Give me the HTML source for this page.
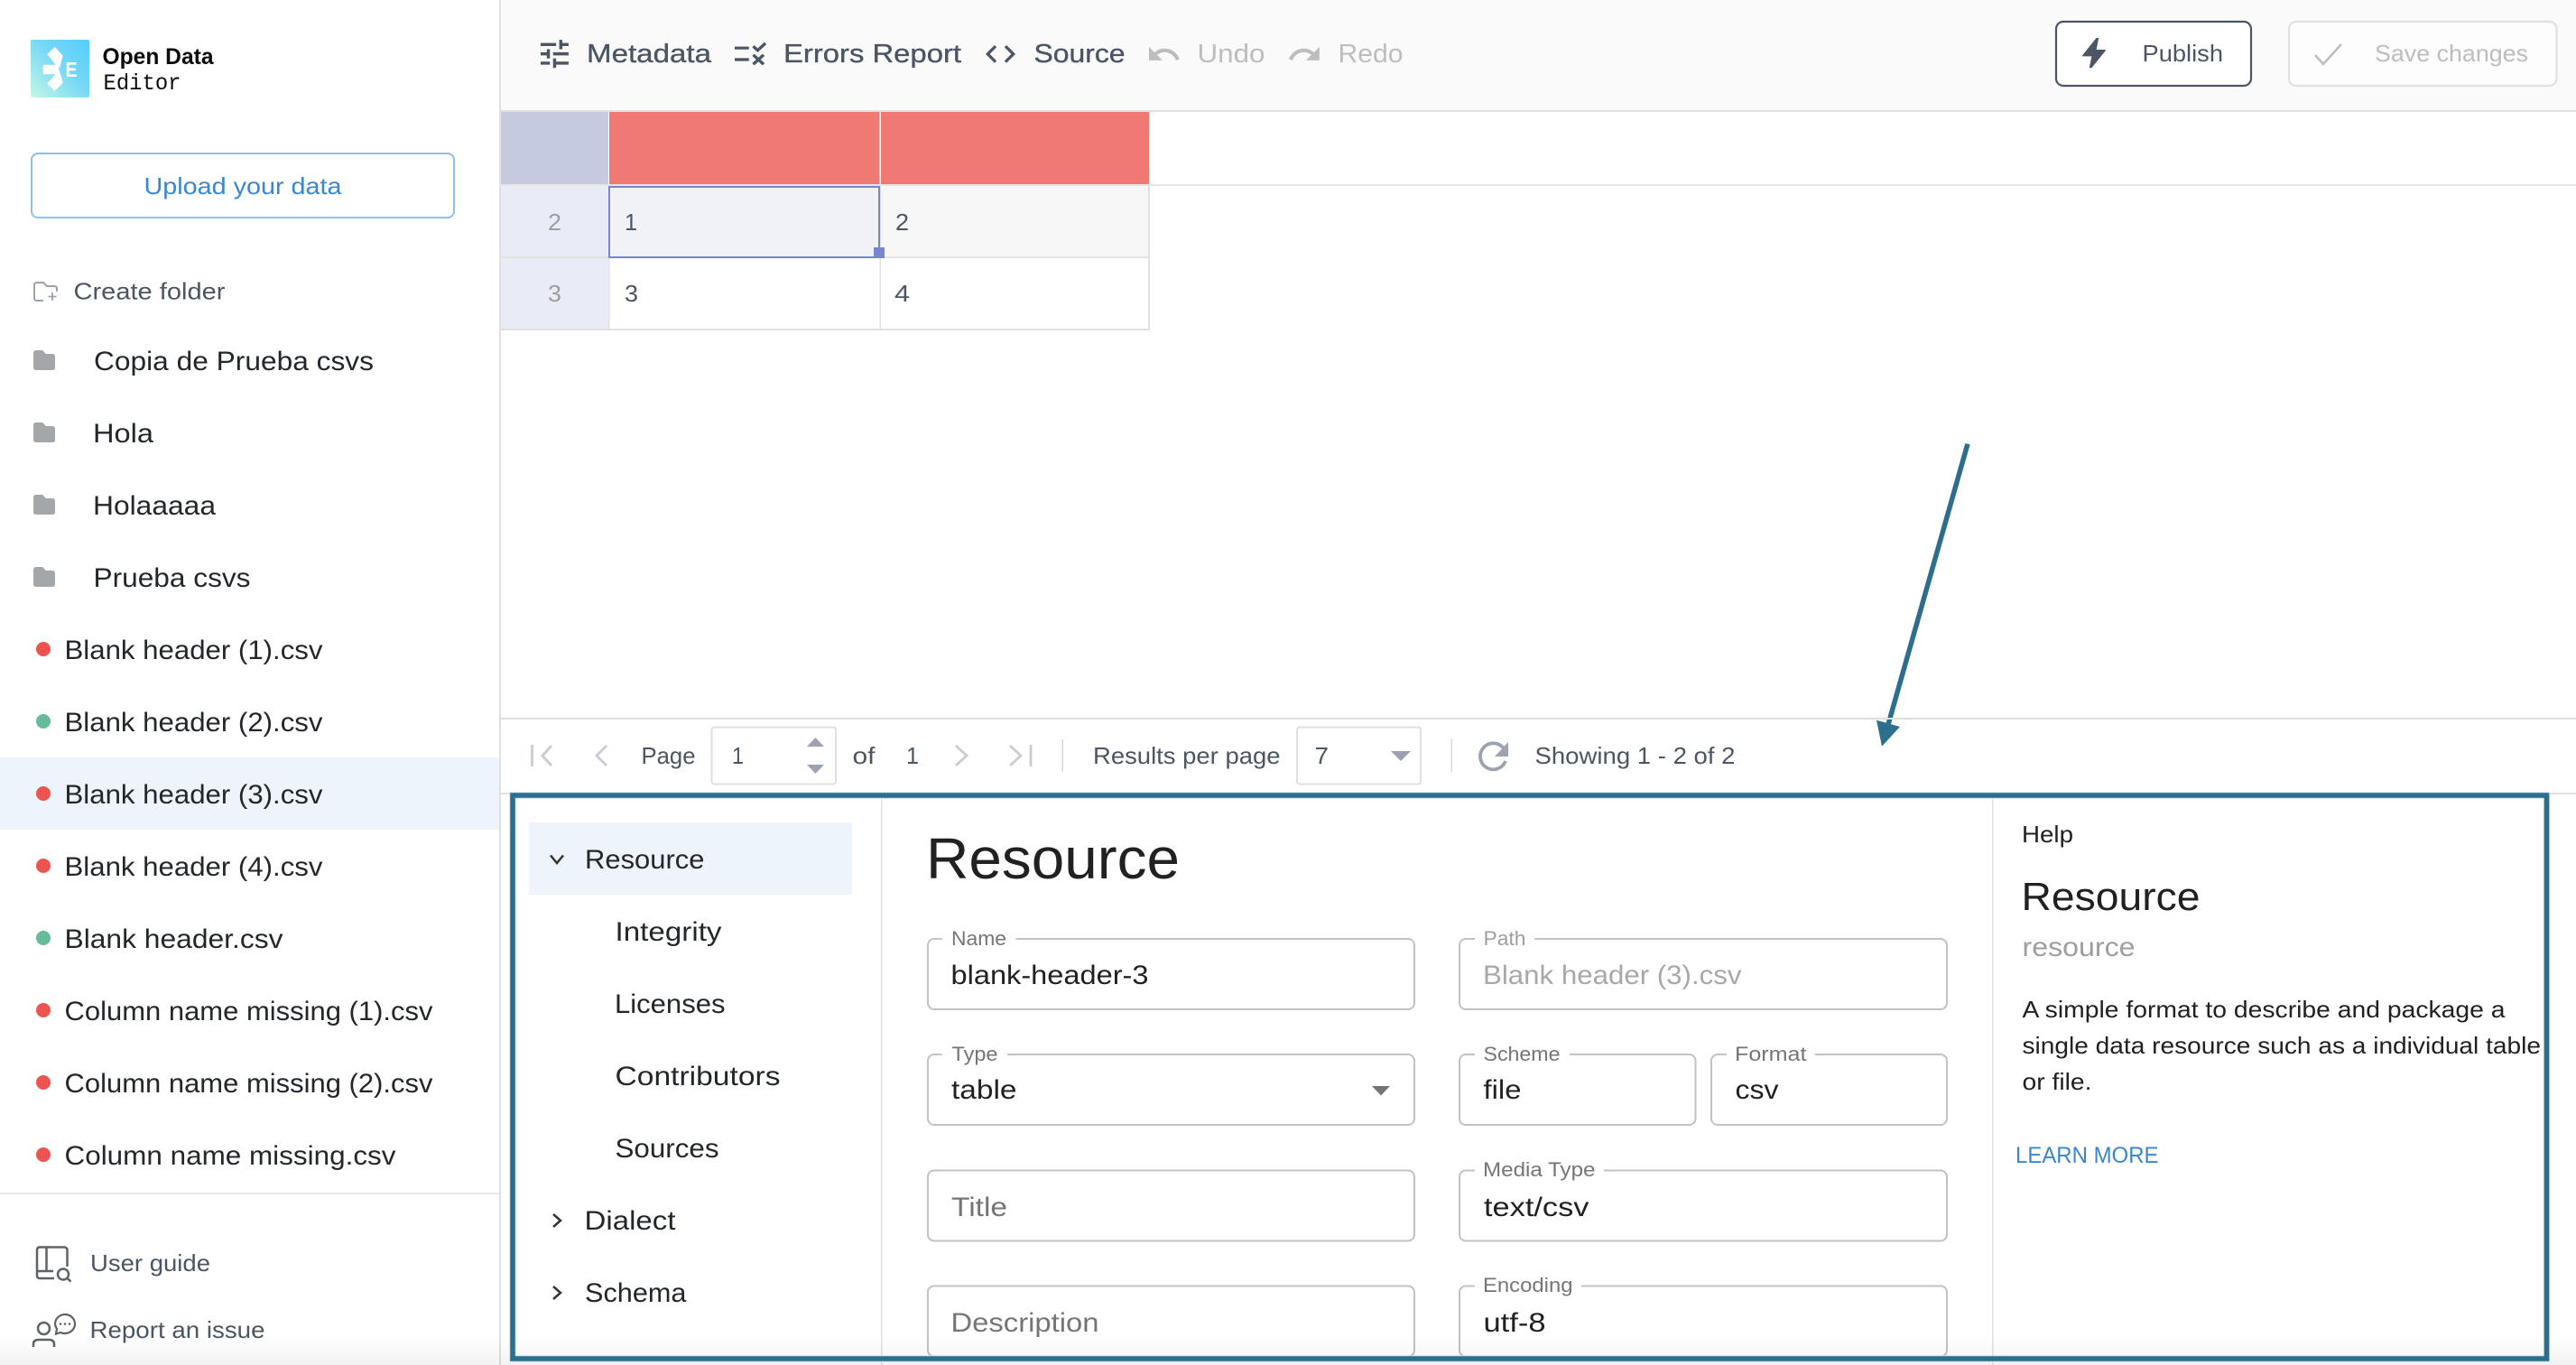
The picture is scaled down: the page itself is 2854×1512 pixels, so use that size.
<!DOCTYPE html>
<html lang="en">
<head>
<meta charset="utf-8">
<title>Open Data Editor</title>
<style>
html,body{margin:0;padding:0;background:#fff;width:2854px;height:1512px;overflow:hidden}
svg{display:block}
text{font-family:"Liberation Sans",sans-serif;white-space:pre}
.s{font-size:30px;fill:#23272b}
.g{font-size:26px;fill:#4b5563}
.t{font-size:29px;fill:#4b5563;font-weight:500;stroke:#4b5563;stroke-width:.35px}
.d{font-size:29px;fill:#bdbdbd}
.n{font-size:30px;fill:#23272b}
.l{font-size:22px;fill:#757575}
.v{font-size:30px;fill:#212121}
.p{font-size:26px;fill:#212121}
.f{fill:#fff;stroke:#c2c2c2;stroke-width:2}
.b{fill:#fff}
</style>
</head>
<body>
<svg width="2854" height="1512" viewBox="0 0 2854 1512" xmlns="http://www.w3.org/2000/svg">
<defs>
<linearGradient id="lg" x1="0" y1="1" x2="1" y2="0">
<stop offset="0" stop-color="#c2f8e6"/><stop offset=".55" stop-color="#76d8f6"/><stop offset="1" stop-color="#55cdfd"/>
</linearGradient>
<linearGradient id="fade" x1="0" y1="0" x2="0" y2="1">
<stop offset="0" stop-color="#000" stop-opacity="0"/><stop offset="1" stop-color="#000" stop-opacity=".05"/>
</linearGradient>
</defs>
<rect width="2854" height="1512" fill="#fff"/>

<!-- top bar -->
<rect x="555" y="0" width="2299" height="122" fill="#fafafa"/>
<rect x="555" y="122" width="2299" height="2" fill="#e0e0e0"/>

<!-- sidebar -->
<rect x="0" y="839" width="553" height="80" fill="#eef4fb"/>
<rect x="553" y="0" width="2" height="1512" fill="#e0e0e0"/>
<rect x="34" y="44" width="65" height="64" rx="2" fill="url(#lg)"/>
<path d="M60.700,52 L69.500,61.500 Q68,70 65,77 Q68,84 69.500,92 L60.700,100.700 L52.300,92.700 L61.500,82.300 L47.700,82.300 L47.700,71.700 L61.500,71.700 L52.300,60 Z" fill="#fff"/>
<text x="72.500" y="85" font-size="23" font-weight="700" fill="#fff" textLength="13" lengthAdjust="spacingAndGlyphs">E</text>
<text x="113.500" y="71" font-size="25" font-weight="700" fill="#0b0b0b" textLength="123" lengthAdjust="spacingAndGlyphs">Open Data</text>
<text x="114.500" y="99" font-size="25" fill="#0b0b0b" textLength="86" lengthAdjust="spacingAndGlyphs" style="font-family:'Liberation Mono',monospace">Editor</text>

<rect x="35" y="170" width="468" height="71" rx="7" fill="#fff" stroke="#90bfe8" stroke-width="2"/>
<text x="159.500" y="215" font-size="26" fill="#3a86cf" textLength="219" lengthAdjust="spacingAndGlyphs">Upload your data</text>

<path d="M38,330 V316 Q38,313 41,313 H48 L52,317 H60 Q63,317 63,320 V323 M48,333 H41 Q38,333 38,330" fill="none" stroke="#9ca3af" stroke-width="2"/>
<path d="M58,324 V333 M53.500,328.500 H62.500" stroke="#9ca3af" stroke-width="1.800" fill="none"/>
<text x="81.500" y="331.500" class="g" textLength="168" lengthAdjust="spacingAndGlyphs">Create folder</text>

<path d="M37,391 Q37,388 40,388 H47 L51,392 H58 Q61,392 61,395 V407 Q61,410 58,410 H40 Q37,410 37,407 Z" fill="#a3a7a9"/>
<path d="M37,471 Q37,468 40,468 H47 L51,472 H58 Q61,472 61,475 V487 Q61,490 58,490 H40 Q37,490 37,487 Z" fill="#a3a7a9"/>
<path d="M37,551 Q37,548 40,548 H47 L51,552 H58 Q61,552 61,555 V567 Q61,570 58,570 H40 Q37,570 37,567 Z" fill="#a3a7a9"/>
<path d="M37,631 Q37,628 40,628 H47 L51,632 H58 Q61,632 61,635 V647 Q61,650 58,650 H40 Q37,650 37,647 Z" fill="#a3a7a9"/>
<text x="104" y="410" class="s" textLength="310" lengthAdjust="spacingAndGlyphs">Copia de Prueba csvs</text>
<text x="103" y="490" class="s" textLength="67" lengthAdjust="spacingAndGlyphs">Hola</text>
<text x="103" y="570" class="s" textLength="136" lengthAdjust="spacingAndGlyphs">Holaaaaa</text>
<text x="103.500" y="650" class="s" textLength="174" lengthAdjust="spacingAndGlyphs">Prueba csvs</text>

<circle cx="48" cy="719" r="8" fill="#ef5350"/>
<text x="71.500" y="730" class="s" textLength="286" lengthAdjust="spacingAndGlyphs">Blank header (1).csv</text>
<circle cx="48" cy="799" r="8" fill="#66bb9a"/>
<text x="71.500" y="810" class="s" textLength="286" lengthAdjust="spacingAndGlyphs">Blank header (2).csv</text>
<circle cx="48" cy="879" r="8" fill="#ef5350"/>
<text x="71.500" y="890" class="s" textLength="286" lengthAdjust="spacingAndGlyphs">Blank header (3).csv</text>
<circle cx="48" cy="959" r="8" fill="#ef5350"/>
<text x="71.500" y="970" class="s" textLength="286" lengthAdjust="spacingAndGlyphs">Blank header (4).csv</text>
<circle cx="48" cy="1039" r="8" fill="#66bb9a"/>
<text x="71.500" y="1050" class="s" textLength="242" lengthAdjust="spacingAndGlyphs">Blank header.csv</text>
<circle cx="48" cy="1119" r="8" fill="#ef5350"/>
<text x="71.500" y="1130" class="s" textLength="408" lengthAdjust="spacingAndGlyphs">Column name missing (1).csv</text>
<circle cx="48" cy="1199" r="8" fill="#ef5350"/>
<text x="71.500" y="1210" class="s" textLength="408" lengthAdjust="spacingAndGlyphs">Column name missing (2).csv</text>
<circle cx="48" cy="1279" r="8" fill="#ef5350"/>
<text x="71.500" y="1290" class="s" textLength="367" lengthAdjust="spacingAndGlyphs">Column name missing.csv</text>

<rect x="0" y="1321" width="553" height="2" fill="#e5e7eb"/>

<!-- user guide icon -->
<path d="M60,1416 H44 Q41,1416 41,1413 V1385 Q41,1381.500 44,1381.500 H71 Q74.500,1381.500 74.500,1385 V1403 M51.500,1381.500 V1408 M41,1408.500 Q41,1408 44,1408 H59" fill="none" stroke="#5f6368" stroke-width="2.500"/>
<circle cx="70" cy="1411.500" r="6" fill="none" stroke="#5f6368" stroke-width="2.500"/>
<path d="M74.500,1416 L78.500,1419.500" stroke="#5f6368" stroke-width="2.500"/>
<text x="100" y="1408" class="g" textLength="133" lengthAdjust="spacingAndGlyphs">User guide</text>

<!-- report icon -->
<circle cx="48.500" cy="1471.500" r="6.500" fill="none" stroke="#5f6368" stroke-width="2.500"/>
<path d="M37,1492 V1489 Q37,1484 43,1484 H54 Q60,1484 60,1489 V1492" fill="none" stroke="#5f6368" stroke-width="2.500"/>
<path d="M62,1477.500 L63,1472 Q61,1469 61,1466 A11,10.500 0 1 1 72,1477 Q69,1477 67,1476 Z" fill="none" stroke="#5f6368" stroke-width="2.200"/>
<circle cx="67" cy="1466.500" r="1.300" fill="#5f6368"/><circle cx="72" cy="1466.500" r="1.300" fill="#5f6368"/><circle cx="77" cy="1466.500" r="1.300" fill="#5f6368"/>
<text x="99.500" y="1482" class="g" textLength="194" lengthAdjust="spacingAndGlyphs">Report an issue</text>

<!-- toolbar -->
<path transform="translate(593.800 39) scale(1.72)" fill="#4b5563" d="M3 17v2h6v-2H3zM3 5v2h10V5H3zm10 16v-2h8v-2h-8v-2h-2v6h2zM7 9v2H3v2h4v2h2V9H7zm14 4v-2H11v2h10zm-6-4h2V7h4V5h-4V3h-2v6z"/>
<text x="650" y="69" class="t" textLength="138" lengthAdjust="spacingAndGlyphs">Metadata</text>
<path transform="translate(810.500 40.400) scale(1.75 1.6)" fill="#4b5563" d="M16.540 11 13 7.460l1.410-1.410 2.120 2.120 4.240-4.240 1.410 1.410L16.540 11zM11 7H2v2h9V7zm10 6.410L19.590 12 17 14.590 14.410 12 13 13.410 15.590 16 13 18.590 14.410 20 17 17.410 19.590 20 21 18.590 18.410 16 21 13.410zM11 15H2v2h9v-2z"/>
<text x="868" y="69" class="t" textLength="197" lengthAdjust="spacingAndGlyphs">Errors Report</text>
<path transform="translate(1088.700 40.100) scale(1.65)" fill="#4b5563" d="M9.400 16.600 4.800 12l4.600-4.600L8 6l-6 6 6 6 1.400-1.400zm5.200 0 4.600-4.600-4.600-4.600L16 6l6 6-6 6-1.400-1.400z"/>
<text x="1145.500" y="69" class="t" textLength="101" lengthAdjust="spacingAndGlyphs">Source</text>
<path transform="translate(1269.700 40.500) scale(1.65)" fill="#bdbdbd" d="M12.500 8c-2.650 0-5.050.99-6.900 2.600L2 7v9h9l-3.620-3.620c1.390-1.160 3.160-1.880 5.120-1.880 3.540 0 6.550 2.310 7.600 5.500l2.370-.78C21.080 11.030 17.150 8 12.500 8z"/>
<text x="1326.500" y="69" class="d" textLength="75" lengthAdjust="spacingAndGlyphs">Undo</text>
<path transform="translate(1425.500 40.500) scale(1.65)" fill="#bdbdbd" d="M18.400 10.600C16.550 8.990 14.150 8 11.500 8c-4.650 0-8.580 3.030-9.960 7.220L3.900 16c1.050-3.190 4.050-5.500 7.600-5.500 1.950 0 3.730.72 5.120 1.880L13 16h9V7l-3.600 3.600z"/>
<text x="1482.500" y="69" class="d" textLength="72" lengthAdjust="spacingAndGlyphs">Redo</text>

<rect x="2278" y="24" width="216" height="71" rx="8" fill="#fff" stroke="#4b5563" stroke-width="2.200"/>
<path transform="translate(2288.800 36.450) scale(2.6 1.85)" fill="#4b5563" d="M11 21h-1l1-7H7.500c-.58 0-.57-.32-.38-.66.19-.34.05-.08.07-.12C8.480 10.940 10.420 7.540 13 3h1l-1 7h3.500c.49 0 .56.33.47.51l-.07.15C12.960 17.550 11 21 11 21z"/>
<text x="2373.500" y="68" font-size="26" fill="#4b5563" textLength="89.500" lengthAdjust="spacingAndGlyphs">Publish</text>
<rect x="2536" y="24" width="296.500" height="71" rx="8" fill="#fdfdfd" stroke="#e0e0e0" stroke-width="2.200"/>
<path d="M2565,61 L2574,71 L2594,49" fill="none" stroke="#bdbdbd" stroke-width="2.500"/>
<text x="2631" y="68" font-size="26" fill="#bdbdbd" textLength="170" lengthAdjust="spacingAndGlyphs">Save changes</text>

<!-- table -->
<rect x="555" y="124" width="119" height="80" fill="#c5cae0"/>
<rect x="675" y="124" width="299.500" height="80" fill="#f07974"/>
<rect x="976" y="124" width="297" height="80" fill="#f07974"/>
<rect x="555" y="204" width="2299" height="2" fill="#e4e4e4"/>
<rect x="555" y="206" width="119" height="158" fill="#e9ecf6"/>
<rect x="555" y="284" width="119" height="2" fill="#e0e0e0"/>
<rect x="976" y="206" width="296" height="78" fill="#f7f7f7"/>
<rect x="974.500" y="206" width="1.500" height="158" fill="#e0e0e0"/>
<rect x="674" y="286" width="1.500" height="78" fill="#e0e0e0"/>
<rect x="1272" y="206" width="2" height="160" fill="#e0e0e0"/>
<rect x="674" y="284" width="600" height="2" fill="#e4e4e4"/>
<rect x="555" y="364" width="719" height="2" fill="#e0e0e0"/>
<rect x="675" y="207" width="299" height="78" fill="#f0f2f8" stroke="#7986cb" stroke-width="2"/>
<rect x="968" y="274" width="12" height="12" fill="#7986cb"/>
<text x="607" y="255" font-size="26" fill="#9e9e9e" textLength="15" lengthAdjust="spacingAndGlyphs">2</text>
<text x="607" y="334" font-size="26" fill="#9e9e9e" textLength="15" lengthAdjust="spacingAndGlyphs">3</text>
<text x="692" y="255" font-size="26" fill="#4b5563" textLength="14" lengthAdjust="spacingAndGlyphs">1</text>
<text x="992" y="255" font-size="26" fill="#4b5563" textLength="15" lengthAdjust="spacingAndGlyphs">2</text>
<text x="692" y="334" font-size="26" fill="#4b5563" textLength="15" lengthAdjust="spacingAndGlyphs">3</text>
<text x="991" y="334" font-size="26" fill="#4b5563" textLength="17" lengthAdjust="spacingAndGlyphs">4</text>

<!-- arrow -->
<path d="M2180,491.700 L2092.200,801.700" stroke="#2d6e8e" stroke-width="5.500" fill="none"/>
<path d="M2079,797.700 L2105,805 L2085,826.700 Z" fill="#2d6e8e"/>

<!-- pagination -->
<rect x="555" y="795" width="2299" height="2" fill="#e0e0e0"/>
<g fill="none" stroke="#c9ccd1" stroke-width="2.800">
<path d="M589.500,825 V849 M611,826 L601,837 L611,848"/>
<path d="M672,826 L661,837 L672,848"/>
<path d="M1059,826 L1071,837 L1059,848"/>
<path d="M1119,826 L1131,837 L1119,848 M1142,825 V849"/>
</g>
<text x="710.500" y="846" font-size="26" fill="#4b5563" textLength="60" lengthAdjust="spacingAndGlyphs">Page</text>
<rect x="788.500" y="805.500" width="137.500" height="63" rx="3" fill="#fff" stroke="#e0e0e0" stroke-width="2"/>
<text x="811" y="846" font-size="26" fill="#4b5563" textLength="13" lengthAdjust="spacingAndGlyphs">1</text>
<path d="M903.500,817 L913,827 H894 Z M894,847 H913 L903.500,857 Z" fill="#9ca3af"/>
<text x="944.500" y="846" font-size="26" fill="#4b5563" textLength="25" lengthAdjust="spacingAndGlyphs">of</text>
<text x="1004" y="846" font-size="26" fill="#4b5563" textLength="14" lengthAdjust="spacingAndGlyphs">1</text>
<rect x="1176.500" y="819" width="1.500" height="36" fill="#d8d8d8"/>
<text x="1211" y="846" font-size="26" fill="#4b5563" textLength="207.500" lengthAdjust="spacingAndGlyphs">Results per page</text>
<rect x="1437" y="805.500" width="137" height="63" rx="3" fill="#fff" stroke="#e0e0e0" stroke-width="2"/>
<text x="1456.500" y="846" font-size="26" fill="#4b5563" textLength="15.500" lengthAdjust="spacingAndGlyphs">7</text>
<path d="M1541,832 H1563 L1552,843 Z" fill="#9ca3af"/>
<rect x="1607.500" y="819" width="1.500" height="36" fill="#d8d8d8"/>
<path d="M1666,829 A14.500,14.500 0 1 0 1668,843" fill="none" stroke="#9ca3af" stroke-width="3.800"/>
<path d="M1671,822 V838 H1656 Z" fill="#9ca3af"/>
<text x="1700.500" y="846" font-size="26" fill="#4b5563" textLength="222" lengthAdjust="spacingAndGlyphs">Showing 1 - 2 of 2</text>

<!-- panel -->
<rect x="555" y="878" width="2299" height="2" fill="#e0e0e0"/>
<rect x="976" y="880" width="1.500" height="632" fill="#e0e0e0"/>
<rect x="2207" y="880" width="1.500" height="632" fill="#e0e0e0"/>

<rect x="586" y="911" width="358" height="80" fill="#eef4fb"/>
<path d="M610,947.500 L617,956 L624,947.500" fill="none" stroke="#333" stroke-width="2.500"/>
<path d="M613,1345 L621,1352 L613,1359" fill="none" stroke="#333" stroke-width="2.500"/>
<path d="M613,1425 L621,1432 L613,1439" fill="none" stroke="#333" stroke-width="2.500"/>
<text x="648" y="962" class="n" textLength="132.500" lengthAdjust="spacingAndGlyphs">Resource</text>
<text x="681.500" y="1042" class="n" textLength="118" lengthAdjust="spacingAndGlyphs">Integrity</text>
<text x="681" y="1122" class="n" textLength="122.500" lengthAdjust="spacingAndGlyphs">Licenses</text>
<text x="681.500" y="1202" class="n" textLength="183" lengthAdjust="spacingAndGlyphs">Contributors</text>
<text x="681.500" y="1282" class="n" textLength="115" lengthAdjust="spacingAndGlyphs">Sources</text>
<text x="647.500" y="1362" class="n" textLength="101" lengthAdjust="spacingAndGlyphs">Dialect</text>
<text x="648" y="1442" class="n" textLength="112.500" lengthAdjust="spacingAndGlyphs">Schema</text>

<text x="1026" y="973" font-size="64" fill="#212121" textLength="281" lengthAdjust="spacingAndGlyphs">Resource</text>

<!-- left fields -->
<rect x="1028" y="1040" width="539" height="78" rx="7" class="f"/>
<rect x="1043.500" y="1036" width="82" height="8" class="b"/>
<text x="1054" y="1047" class="l" textLength="61" lengthAdjust="spacingAndGlyphs">Name</text>
<text x="1053.500" y="1090" class="v" textLength="219" lengthAdjust="spacingAndGlyphs">blank-header-3</text>

<rect x="1028" y="1168" width="539" height="78" rx="7" class="f"/>
<rect x="1043.500" y="1164" width="72.500" height="8" class="b"/>
<text x="1054.500" y="1175" class="l" textLength="51" lengthAdjust="spacingAndGlyphs">Type</text>
<text x="1054" y="1217" class="v" textLength="72.500" lengthAdjust="spacingAndGlyphs">table</text>
<path d="M1520,1203 H1540 L1530,1213.500 Z" fill="#757575"/>

<rect x="1028" y="1296.500" width="539" height="78" rx="7" class="f"/>
<text x="1054" y="1347" font-size="30" fill="#757575" textLength="62" lengthAdjust="spacingAndGlyphs">Title</text>

<rect x="1028" y="1424.500" width="539" height="78" rx="7" class="f"/>
<text x="1053.500" y="1475" font-size="30" fill="#757575" textLength="164" lengthAdjust="spacingAndGlyphs">Description</text>

<!-- right fields -->
<rect x="1617" y="1040" width="540" height="78" rx="7" class="f"/>
<rect x="1634" y="1036" width="66" height="8" class="b"/>
<text x="1643.500" y="1047" font-size="22" fill="#9e9e9e" textLength="47" lengthAdjust="spacingAndGlyphs">Path</text>
<text x="1643" y="1090" font-size="30" fill="#a8a8a8" textLength="286.500" lengthAdjust="spacingAndGlyphs">Blank header (3).csv</text>

<rect x="1617" y="1168" width="261.500" height="78" rx="7" class="f"/>
<rect x="1634" y="1164" width="105" height="8" class="b"/>
<text x="1643.500" y="1175" class="l" textLength="85" lengthAdjust="spacingAndGlyphs">Scheme</text>
<text x="1643.500" y="1217" class="v" textLength="42" lengthAdjust="spacingAndGlyphs">file</text>

<rect x="1896" y="1168" width="261" height="78" rx="7" class="f"/>
<rect x="1913" y="1164" width="97.500" height="8" class="b"/>
<text x="1922" y="1175" class="l" textLength="79.500" lengthAdjust="spacingAndGlyphs">Format</text>
<text x="1922.500" y="1217" class="v" textLength="48" lengthAdjust="spacingAndGlyphs">csv</text>

<rect x="1617" y="1296.500" width="540" height="78" rx="7" class="f"/>
<rect x="1634" y="1292" width="143" height="8" class="b"/>
<text x="1643" y="1303" class="l" textLength="124.500" lengthAdjust="spacingAndGlyphs">Media Type</text>
<text x="1644" y="1347" class="v" textLength="116.500" lengthAdjust="spacingAndGlyphs">text/csv</text>

<rect x="1617" y="1424.500" width="540" height="78" rx="7" class="f"/>
<rect x="1634" y="1420" width="118" height="8" class="b"/>
<text x="1643" y="1431" class="l" textLength="99.500" lengthAdjust="spacingAndGlyphs">Encoding</text>
<text x="1643.500" y="1475" class="v" textLength="69" lengthAdjust="spacingAndGlyphs">utf-8</text>

<!-- help -->
<text x="2240" y="933" class="p" textLength="57" lengthAdjust="spacingAndGlyphs">Help</text>
<text x="2239.500" y="1008" font-size="44" fill="#212121" textLength="198" lengthAdjust="spacingAndGlyphs">Resource</text>
<text x="2240.500" y="1059" font-size="30" fill="#9e9e9e" textLength="125" lengthAdjust="spacingAndGlyphs">resource</text>
<text x="2240.500" y="1127" class="p" textLength="535" lengthAdjust="spacingAndGlyphs">A simple format to describe and package a</text>
<text x="2240.500" y="1167" class="p" textLength="574.500" lengthAdjust="spacingAndGlyphs">single data resource such as a individual table</text>
<text x="2240.500" y="1207" class="p" textLength="77" lengthAdjust="spacingAndGlyphs">or file.</text>
<text x="2233" y="1288" font-size="25" fill="#3a86cf" textLength="158.500" lengthAdjust="spacingAndGlyphs">LEARN MORE</text>

<!-- bottom fade -->
<rect x="0" y="1480" width="2854" height="32" fill="url(#fade)"/>

<!-- frame -->
<rect x="568" y="881" width="2253.500" height="624" fill="none" stroke="#d5e3ea" stroke-width="7.500"/>
<rect x="568" y="881" width="2253.500" height="624" fill="none" stroke="#2d6e8e" stroke-width="5.500"/>
</svg>
</body>
</html>
